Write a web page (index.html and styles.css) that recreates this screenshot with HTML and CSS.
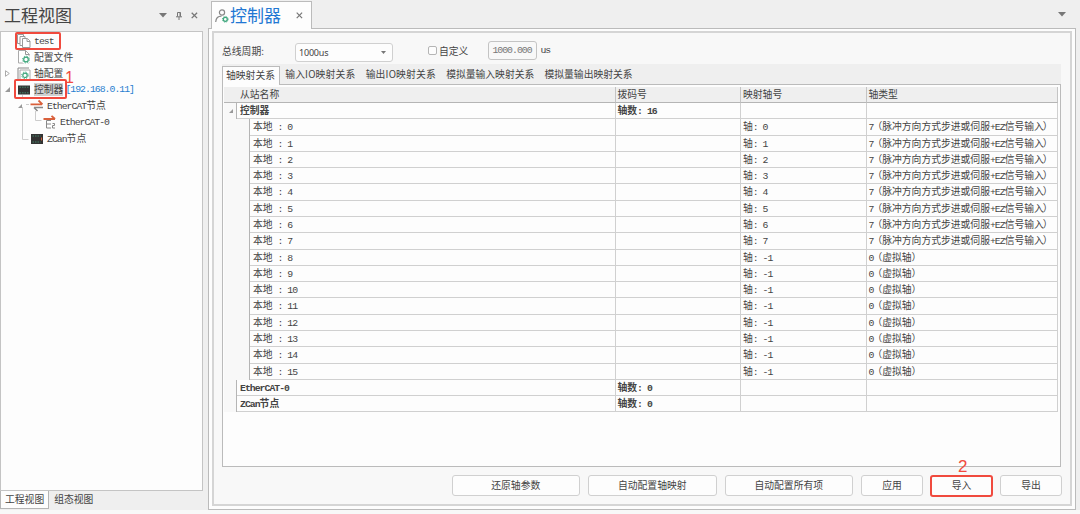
FILE: index.html
```html
<!DOCTYPE html>
<html lang="zh-CN">
<head>
  <meta charset="UTF-8" />
  <meta name="viewport" content="width=device-width, initial-scale=1.0"/>
  <title>控制器</title>
  <link rel="stylesheet" href="styles.css">
</head>

<body>
  <div class="app">
    <div class="sidebar">
      <div class="sidebar-header">
        <h2>工程视图</h2>
        <svg class="arrow" width="8" height="5" viewBox="0 0 8 5"><path d="M0 0h8L4 4.5z" fill="#777"/></svg>
        <svg class="pin" width="6" height="8" viewBox="0 0 6 8"><path d="M1.5 0.5h3v4M1.5 0.5v4M0 4.8h6M3 5v3M4 0.5v4" fill="none" stroke="#777"/></svg>
        <svg class="close" width="7" height="7" viewBox="0 0 7 7"><path d="M0.7 0.7l5.4 5.4M6.1 0.7L0.7 6.1" stroke="#777" stroke-width="1.3"/></svg>
      </div>

      <div class="tree">
        <div class="node">
          <svg class="icon" width="14" height="14" viewBox="0 0 14 14"><g fill="#fff" stroke="#999"><path d="M0.5 0.5h6v9h-6z"/><path d="M3 2.5h5v9H3z"/><path d="M5.500 4.500h5l2.500 2.500v6.500h-7.500z"/><path d="M10 4.500v3h3"/></g></svg>
          <span class="label mono">test</span>
        </div>
        <div class="node">
          <svg class="icon" width="14" height="14" viewBox="0 0 14 14"><path d="M1.500 0.500h7l3.500 3.500v9H1.500z" fill="#fff" stroke="#aaa"/><path d="M8.500 0.500v4h4" fill="none" stroke="#999"/><circle cx="9" cy="9.500" r="4.500" fill="#fff"/><circle cx="9" cy="9.500" r="2.300" fill="none" stroke="#3fa77d" stroke-width="1.200"/><circle cx="9" cy="9.500" r="3.400" fill="none" stroke="#3fa77d" stroke-dasharray="1.300 1.370"/></svg>
          <span class="label">配置文件</span>
        </div>
        <div class="node">
          <svg class="twisty" width="5" height="7" viewBox="0 0 5 7"><path d="M0.500 0.700v5.600L4.300 3.500z" fill="#fff" stroke="#aaa"/></svg>
          <svg class="icon" width="14" height="14" viewBox="0 0 14 14"><path d="M1 13V1h11" fill="none" stroke="#888"/><path d="M3 3h10v10H3z" fill="#fff" stroke="#aaa"/><circle cx="8" cy="8.300" r="2.200" fill="none" stroke="#3fa77d" stroke-width="1.200"/><circle cx="8" cy="8.300" r="3.300" fill="none" stroke="#3fa77d" stroke-dasharray="1.300 1.290"/></svg>
          <span class="label">轴配置</span>
        </div>
        <div class="node">
          <svg class="twisty" width="5" height="5" viewBox="0 0 5 5"><path d="M5 0v5H0z" fill="#999"/></svg>
          <svg class="icon" width="14" height="14" viewBox="0 0 14 14"><path d="M1 2.500h12v9H1z" fill="#333"/><path d="M2.500 4.200h9M2.500 9.800h9" stroke="#438269" stroke-dasharray="1.500 1"/></svg>
          <span class="label selected">控制器</span>
          <span class="label mono ip">[192.168.0.11]</span>
        </div>
        <div class="node level2">
          <svg class="twisty" width="4" height="4" viewBox="0 0 5 5"><path d="M5 0v5H0z" fill="#999"/></svg>
          <svg class="icon wide" width="14" height="14" viewBox="0 0 14 14"><path d="M0.500 5.300H12M8.500 1.500l4 3.800" fill="none" stroke="#d9603b" stroke-width="1.800"/><path d="M13 8.500H4M4 8.500l3.500 3.500" fill="none" stroke="#888" stroke-width="1.500"/></svg>
          <span class="label"><span class="mono">EtherCAT</span>节点</span>
        </div>
        <div class="node level3">
          <svg class="icon" width="14" height="14" viewBox="0 0 14 14"><path d="M0.500 4H12M8.500 0.800l3.500 3.200" fill="none" stroke="#d9603b" stroke-width="1.800"/><path d="M8 5.500H3.500v7.500H8M3.500 9H8M9.500 8.500h2v2h-2v2.500h2.500" fill="none" stroke="#888"/></svg>
          <span class="label mono">EtherCAT-0</span>
        </div>
        <div class="node level2">
          <svg class="icon" width="14" height="14" viewBox="0 0 14 14"><path d="M1 2h12v10H1z" fill="#333"/><path d="M2.500 4h8M2.500 10h8" stroke="#438269" stroke-dasharray="1.500 1"/><path d="M11.500 5.500v3" stroke="#d9603b"/></svg>
          <span class="label"><span class="mono">ZCan</span>节点</span>
        </div>
        <svg class="tree-lines" width="22" height="48" viewBox="0 0 22 48"><path d="M1.500 0v4M1.500 12v32.500h6M5 9.500h3M14.500 16v9.500h6" fill="none" stroke="#ccc"/></svg>
        <div class="mark mark-test"></div>
        <div class="mark mark-controller"></div>
        <span class="step step-1">1</span>
      </div>

      <div class="sidebar-tabs">
        <div class="side-tab active">工程视图</div>
        <div class="side-tab">组态视图</div>
      </div>
    </div>

    <div class="main">
      <div class="doc-tabs">
        <div class="doc-tab">
          <svg width="14" height="14" viewBox="0 0 14 14"><circle cx="7" cy="3.500" r="2.600" fill="none" stroke="#888" stroke-width="1.200"/><path d="M0.700 13c0.300-4 2.500-5.800 5.800-5.800" fill="none" stroke="#888" stroke-width="1.200"/><circle cx="10.300" cy="10.300" r="2" fill="none" stroke="#3fa77d" stroke-width="1.300"/><circle cx="10.300" cy="10.300" r="2.900" fill="none" stroke="#3fa77d" stroke-dasharray="1 1.280"/></svg>
          <span class="doc-title">控制器</span>
          <svg class="close" width="7" height="7" viewBox="0 0 7 7"><path d="M0.700 0.700l5.400 5.400M6.100 0.700L0.700 6.100" stroke="#777" stroke-width="1.200"/></svg>
        </div>
        <svg class="arrow" width="8" height="5" viewBox="0 0 8 5"><path d="M0 0h8L4 4.500z" fill="#777"/></svg>
      </div>

      <div class="frame">
        <div class="page">
          <div class="toolbar">
            <span class="bus-label">总线周期:</span>
            <div class="select">1000us
              <svg width="5" height="3" viewBox="0 0 5 3"><path d="M0 0h5L2.500 3z" fill="#777"/></svg>
            </div>
            <span class="checkbox"></span>
            <span>自定义</span>
            <div class="number mono">1000.000</div>
            <span class="mono">us</span>
          </div>

          <div class="tabs">
            <div class="tab active">轴映射关系</div>
            <div class="tab io">输入IO映射关系</div>
            <div class="tab io">输出IO映射关系</div>
            <div class="tab">模拟量输入映射关系</div>
            <div class="tab">模拟量输出映射关系</div>
          </div>

          <div class="grid-box">
            <div class="row head">
              <div class="cell name">从站名称</div>
              <div class="cell">拨码号</div>
              <div class="cell">映射轴号</div>
              <div class="cell">轴类型</div>
            </div>
            <div id="rows"></div>
          </div>

          <div class="buttons">
            <div class="btn wide">还原轴参数</div>
            <div class="btn wide">自动配置轴映射</div>
            <div class="btn wide">自动配置所有项</div>
            <div class="btn">应用</div>
            <div class="btn import">导入<span class="step step-2">2</span></div>
            <div class="btn">导出</div>
          </div>
        </div>
      </div>
    </div>
  </div>

  <script>
    const rowsDiv = document.getElementById('rows');

    const mono = text => `<span class="mono">${text}</span>`;
    const pulseType = `${mono('7')}<span class="paren">（</span>脉冲方向方式步进或伺服${mono('+EZ')}信号输入<span class="paren">）</span>`;
    const virtualType = `${mono('0')}<span class="paren">（</span>虚拟轴）`;

    function groupRow(name, count, open) {
      const twisty = open ? '<svg width="4" height="4" viewBox="0 0 4 4"><path d="M4 0v4H0z" fill="#999"/></svg>' : '';
      return `
        <div class="row group">
          <div class="gutter">${twisty}</div>
          <div class="cell name">${name}</div>
          <div class="cell">轴数${mono(': ' + count)}</div>
          <div class="cell"></div>
          <div class="cell"></div>
        </div>`;
    }

    function axisRow(i) {
      const real = i < 8;
      return `
        <div class="row child">
          <div class="gutter"></div>
          <div class="cell name">本地${mono(' : ' + i)}</div>
          <div class="cell"></div>
          <div class="cell">轴${mono(': ' + (real ? i : -1))}</div>
          <div class="cell">${real ? pulseType : virtualType}</div>
        </div>`;
    }

    let html = groupRow('控制器', 16, true);
    for (let i = 0; i < 16; i++) {
      html += axisRow(i);
    }
    html += groupRow(mono('EtherCAT-0'), 0, false);
    html += groupRow(mono('ZCan') + '节点', 0, false);
    rowsDiv.innerHTML = html;
  </script>
</body>
</html>
```

FILE: styles.css
```css
* {
  box-sizing: border-box;
}

body {
  margin: 0;
  background-color: #f8f8f8;
  color: #444;
  font-family: "Noto Sans CJK SC", sans-serif;
  font-size: 9.8px;
  line-height: 16px;
  white-space: nowrap;
  overflow: hidden;
}

svg {
  display: block;
  flex: none;
}

.mono {
  font-family: "Liberation Mono", monospace;
  font-size: 9.8px;
  letter-spacing: -0.98px;
  line-height: 13px;
  white-space: pre;
}

.app {
  display: flex;
  height: 510px;
  background-color: #efefef;
}

/* left panel */
.sidebar {
  width: 203px;
  margin-right: 5px;
  display: flex;
  flex-direction: column;
}

.sidebar-header {
  height: 31px;
  display: flex;
  align-items: center;
  padding: 0 5px 0 4px;
}

.sidebar-header h2 {
  flex: 1;
  margin: -2px 0 0;
  font-size: 17px;
  font-weight: normal;
}

.sidebar-header .pin {
  margin: 0 9px 0 9px;
}

.tree {
  position: relative;
  height: 460px;
  padding-top: 1px;
  background-color: #fdfdfd;
  border: 1px solid #c4c4c4;
}

.node {
  display: flex;
  align-items: center;
  height: 16.25px;
  padding-left: 4px;
}

.node .twisty {
  margin-right: -5px;
}

.node .icon {
  margin-left: 12px;
}

.node .icon.wide {
  margin-left: 13px;
}

.node .label {
  margin-left: 3px;
  line-height: 13px;
}

.node .selected {
  background-color: #d0d0d0;
}

.node .ip {
  margin-left: 2px;
  color: #2a7fd0;
}

.level2 {
  padding-left: 17px;
}

.level3 {
  padding-left: 30px;
}

.tree-lines {
  position: absolute;
  left: 20px;
  top: 63px;
}

.sidebar-tabs {
  display: flex;
  height: 18px;
}

.side-tab {
  padding: 0 5px;
}

.side-tab.active {
  background-color: #fdfdfd;
  border: 1px solid #b5b5b5;
  border-top: none;
  padding: 0 4px;
}

/* red highlight frames and step numbers */
.mark {
  position: absolute;
  border: 2px solid #f04a3e;
  border-radius: 2px;
}

.mark-test {
  left: 14px;
  top: 0;
  width: 46px;
  height: 18px;
}

.mark-controller {
  left: 13px;
  top: 47px;
  width: 53px;
  height: 20px;
}

.step {
  position: absolute;
  color: #f04a3e;
  font-family: "Liberation Sans", sans-serif;
  font-size: 17px;
  line-height: 17px;
}

.step-1 {
  left: 64px;
  top: 37px;
  font-size: 16px;
}

.step-2 {
  left: 26px;
  top: -19px;
}

/* document area */
.main {
  width: 868px;
}

.doc-tabs {
  display: flex;
  justify-content: space-between;
  height: 28px;
  padding: 1px 10px 0 3px;
}

.doc-tabs .arrow {
  margin-top: 11px;
}

.doc-tab {
  position: relative;
  display: flex;
  align-items: center;
  width: 101px;
  height: 28px;
  padding-left: 3px;
  background-color: #fdfdfd;
  border: 1px solid #bbb;
  border-bottom: none;
}

.doc-title {
  margin: -2px 0 0 1px;
  color: #2277d3;
  font-size: 17px;
  line-height: 24px;
}

.doc-tab .close {
  margin-left: 15px;
}

.frame {
  height: 482px;
  padding: 2px 3px 3px;
  background-color: #fdfdfd;
  border: 1px solid #bbb;
}

.page {
  height: 475px;
  padding: 0 9px 0 8px;
  background-color: #f8f8f8;
  border: 2px solid #d5d5d5;
}

.toolbar {
  display: flex;
  align-items: center;
  height: 31px;
  padding-top: 4px;
}

.bus-label {
  width: 73px;
}

.select {
  display: flex;
  align-items: center;
  justify-content: space-between;
  width: 98px;
  height: 19px;
  margin-top: 3px;
  padding: 1px 6px 0 3px;
  background-color: #fdfdfd;
  border: 1px solid #d0d0d0;
  border-radius: 3px;
  font-family: "Noto Sans", sans-serif;
  font-size: 9px;
  letter-spacing: -0.2px;
}

.checkbox {
  width: 9px;
  height: 9px;
  margin: 0 2px 0 35px;
  background-color: #fdfdfd;
  border: 1px solid #b5b5b5;
  border-radius: 2px;
}

.number {
  width: 49px;
  height: 19px;
  margin: 0 3px 0 20px;
  padding: 2px 0 0 3px;
  border: 1px solid #c4c4c4;
  border-radius: 3px;
  color: #777;
}

.tabs {
  display: flex;
  height: 20px;
  background-color: #efefef;
}

.tab {
  margin-right: 0.2px;
  padding: 2px 5px 0;
}

.tab.io {
  letter-spacing: 0.17px;
}

.tab.active {
  width: 58px;
  height: 19px;
  margin-top: 2px;
  padding: 0 0 0 3px;
  background-color: #fdfdfd;
  border: 1px solid #bbb;
  border-bottom: none;
  z-index: 1;
}

.grid-box {
  height: 383px;
  padding: 2px 2px 0 1px;
  background-color: #fdfdfd;
  border: 1px solid #bbb;
}

.row {
  display: flex;
  height: 16.29px;
  line-height: 14px;
}

.cell {
  width: 125.5px;
  padding-left: 2px;
  border-right: 1px solid #d0d0d0;
  border-bottom: 1px solid #d0d0d0;
}

.cell:last-child {
  width: 191.5px;
}

.cell.name {
  flex: 1;
}

.paren {
  margin-left: -1px;
}

.head {
  height: 16px;
  background-color: #efefef;
}

.head .cell {
  border-right-color: #c4c4c4;
  border-bottom-color: #b5b5b5;
}

.head .name {
  padding-left: 16px;
}

.gutter {
  width: 13px;
  background-color: #f8f8f8;
  border-right: 1px solid #b5b5b5;
}

.group .gutter {
  padding: 6px 0 0 5px;
}

.child .gutter {
  width: 26px;
}

.group {
  font-weight: bold;
}

.group .name,
.child .name {
  padding-left: 3px;
}

.buttons {
  display: flex;
  justify-content: flex-end;
  gap: 8px;
  margin-right: -1px;
  padding-top: 8px;
}

.btn {
  position: relative;
  width: 62px;
  height: 21px;
  background-color: #fdfdfd;
  border: 1px solid #d0d0d0;
  border-radius: 3px;
  line-height: 19px;
  text-align: center;
}

.btn.wide {
  width: 128.5px;
}

.btn.import {
  width: 63px;
  height: 22px;
  margin: 0 -1px;
  border: 2px solid #f04a3e;
  line-height: 17px;
}
```
